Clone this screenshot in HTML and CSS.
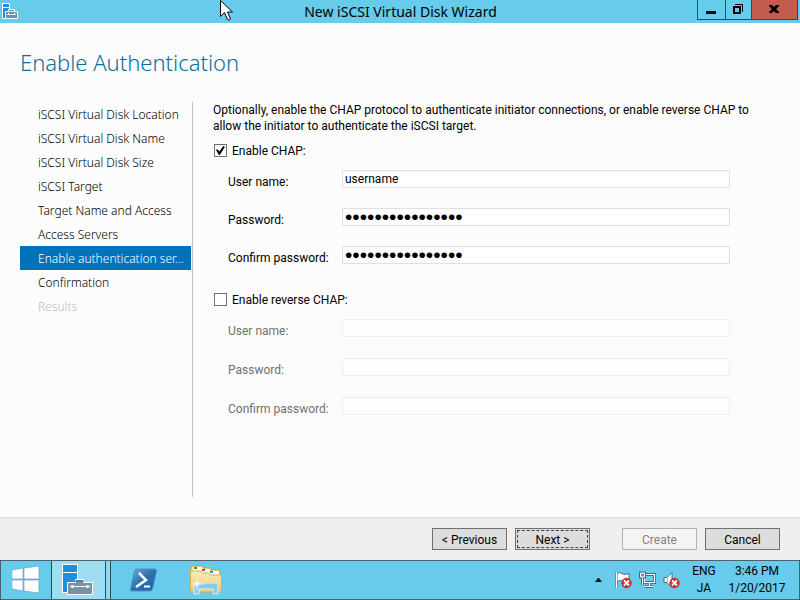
FILE: index.html
```html
<!DOCTYPE html>
<html lang="en">
<head>
<meta charset="utf-8">
<title>New iSCSI Virtual Disk Wizard</title>
<link rel="stylesheet" href="styles.css">
</head>
<body>
<div class="desktop">
  <header class="titlebar">
    <svg class="app-icon" width="18" height="18" viewBox="0 0 18 18" aria-hidden="true">
      <path d="M1.500 1.500h7v15h-7z" fill="#1f8fdc" stroke="#fff"/>
      <path d="M2 5.500h6" stroke="#fff"/>
      <path d="M4.500 9.500h3v-2h6v2h3v7h-12z" fill="#6f8ea8" stroke="#fff"/>
      <path d="M8 9.500h5M6 12.500h9" stroke="#dfeaf2"/>
      <path d="M7.500 11v2M13.500 11v2" stroke="#fff"/>
    </svg>
    <h1 class="window-title">New iSCSI Virtual Disk Wizard</h1>
    <div class="window-buttons">
      <button class="win-btn min" type="button" aria-label="Minimize"><svg width="10" height="11" viewBox="0 0 10 11"><path d="M0 7h10v3H0z"/></svg></button>
      <button class="win-btn max" type="button" aria-label="Restore"><svg width="10" height="10" viewBox="0 0 10 10"><path d="M2 0h8v8H9V1H2zM0 2h8v8H0zM2 4v4h4V4z" fill-rule="evenodd"/></svg></button>
      <button class="win-btn close" type="button" aria-label="Close"><svg width="10" height="8" viewBox="0 0 10 8"><path d="M0 0h3l2 2 2-2h3v1L7 4l3 3v1H7L5 6 3 8H0V7l3-3-3-3z"/></svg></button>
    </div>
  </header>

  <main class="content">
    <h2 class="page-title">Enable Authentication</h2>
    <div class="columns">
      <nav class="steps">
        <a href="#location">iSCSI Virtual Disk Location</a>
        <a href="#name">iSCSI Virtual Disk Name</a>
        <a href="#size">iSCSI Virtual Disk Size</a>
        <a href="#target">iSCSI Target</a>
        <a href="#access">Target Name and Access</a>
        <a href="#servers">Access Servers</a>
        <a class="current" href="#auth" aria-current="step">Enable authentication ser...</a>
        <a href="#confirmation">Confirmation</a>
        <a class="off" aria-disabled="true">Results</a>
      </nav>
      <form class="auth" id="auth">
        <p class="intro">Optionally, enable the CHAP protocol to authenticate initiator connections, or enable reverse CHAP to<br>allow the initiator to authenticate the iSCSI target.</p>
        <label class="toggle"><input type="checkbox" checked> Enable CHAP:</label>
        <div class="fields">
          <label for="user">User name:</label><input id="user" type="text" value="username">
          <label for="pass">Password:</label><input id="pass" type="password" value="aaaaaaaaaaaaaaaa">
          <label for="pass2">Confirm password:</label><input id="pass2" type="password" value="aaaaaaaaaaaaaaaa">
        </div>
        <label class="toggle"><input type="checkbox"> Enable reverse CHAP:</label>
        <div class="fields disabled">
          <label for="ruser">User name:</label><input id="ruser" type="text" disabled>
          <label for="rpass">Password:</label><input id="rpass" type="password" disabled>
          <label for="rpass2">Confirm password:</label><input id="rpass2" type="password" disabled>
        </div>
      </form>
    </div>
  </main>

  <footer class="actions">
    <button class="btn" type="button">&lt; Previous</button>
    <button class="btn focused" type="button">Next &gt;</button>
    <button class="btn create" type="button" disabled>Create</button>
    <button class="btn" type="button">Cancel</button>
  </footer>

  <div class="taskbar">
    <button class="task start" type="button" aria-label="Start">
      <svg width="28" height="28" viewBox="0 0 28 28"><path d="M0 4l11-2v11H0zM12 2l15-2v13H12zM0 14h11v11L0 23zM12 14h15v13l-15-2z" fill="#fff" stroke="#4b9fc0" stroke-width=".6"/></svg>
    </button>
    <button class="task active" type="button" aria-label="Server Manager">
      <svg width="34" height="34" viewBox="0 0 34 34"><path d="M1.500 1.500h15v28h-15z" fill="#1f8fdc" stroke="#fff"/><path d="M2 9.500h14" stroke="#fff"/><path d="M6.500 19.500h8v-3h8v3h9v12h-25z" fill="#7592a8" stroke="#fff"/><path d="M14.500 17h8v2h-8z" fill="#5c7c94"/><path d="M9 23.500h20" stroke="#fff"/><path d="M11.500 22v3M26.500 22v3" stroke="#fff" stroke-width="2"/></svg>
    </button>
    <button class="task shell" type="button" aria-label="PowerShell">
      <svg width="28" height="24" viewBox="0 0 28 24"><defs><linearGradient id="ps" x1="0" y1="0" x2="1" y2="1"><stop offset="0" stop-color="#6daed9"/><stop offset=".5" stop-color="#2b70b0"/><stop offset="1" stop-color="#2263a5"/></linearGradient></defs><path d="M7 1h18q2 0 1.500 2l-4 18q-.5 2-2.500 2H2q-2 0-1.500-2l4-18Q5 1 7 1z" fill="url(#ps)" stroke="#4c91bd"/><path d="M9 5l7 7-10 7" fill="none" stroke="#fff" stroke-width="2.500"/><path d="M14 18.500h6" stroke="#fff" stroke-width="2"/></svg>
    </button>
    <button class="task files" type="button" aria-label="File Explorer">
      <svg width="34" height="30" viewBox="0 0 34 30"><defs><linearGradient id="fo" x1="0" y1="0" x2="0" y2="1"><stop offset="0" stop-color="#fbeeb5"/><stop offset="1" stop-color="#e9c871"/></linearGradient></defs><path d="M2 26V3q0-2 2-2h9q1 0 1 2h7q1 0 1 2h7q2 0 2 2v19z" fill="#f3dd95" stroke="#c9a653"/><path d="M4 2h9v4H4zM13 4h8v4h-8zM21 6h9v4h-9z" fill="#fff"/><path d="M5 2h3v2H5z" fill="#21a536"/><path d="M13 4h3v2h-3z" fill="#d93c27"/><path d="M21 6h3v2h-3z" fill="#2c8ed6"/><path d="M1.500 7q0-1 1-1h9l2 2h6l2 2h11v16q0 1-1 1h-29q-1 0-1-1z" fill="url(#fo)" stroke="#d3ae58"/><path d="M5 29v-8q0-3 3-3h18q3 0 3 3v8h-5v-5H10v5z" fill="#8bcae7" stroke="#d6f1fb"/><path d="M8 13v12M2 19h12" stroke="#fff" stroke-width=".8"/><path d="M5 16l6 6M11 16l-6 6" stroke="#fff" stroke-width=".5"/><circle cx="8" cy="19" r="1.800" fill="#fff"/></svg>
    </button>
    <div class="tray">
      <svg class="caret" width="7" height="4" viewBox="0 0 7 4"><path d="M3 0h1l3 4H0z" fill="#111"/></svg>
      <svg width="17" height="18" viewBox="0 0 17 18"><path d="M1.500 1v16" stroke="#476b7b" stroke-width="2"/><path d="M2 2.500q3-2 5 0t7 0v8q-4 2-6 0t-6 0z" fill="#fff" stroke="#476b7b"/><path d="M1.500 1v16" stroke="#fff"/><circle cx="11.500" cy="12" r="4.800" fill="#d92c25" stroke="#a92320" stroke-width=".6"/><path d="M9 9.500l5 5M14 9.500l-5 5" stroke="#fff" stroke-width="1.800"/></svg>
      <svg width="17" height="18" viewBox="0 0 17 18"><path d="M6 3.500h9.500v8H5.500M10.500 12v3M6 15.500h8" fill="none" stroke="#476b7b" stroke-width="3"/><path d="M6 3.500h9.500v8H5.500V7M10.500 12v3M6 15.500h8" fill="none" stroke="#fff" stroke-width="1.200"/><path d="M1.500 2h4v4h-4zM3.500 7v7" fill="#6797aa" stroke="#476b7b" stroke-width="3"/><path d="M1.500 2h4v4h-4zM3.500 7v7" fill="#6797aa" stroke="#fff"/></svg>
      <svg width="17" height="18" viewBox="0 0 17 18"><path d="M1 6.500h3l5-5v15l-5-5H1z" fill="#fff" stroke="#476b7b"/><path d="M4.500 7v4" stroke="#8bb0be"/><circle cx="11.500" cy="12" r="4.800" fill="#d92c25" stroke="#a92320" stroke-width=".6"/><path d="M9 9.500l5 5M14 9.500l-5 5" stroke="#fff" stroke-width="1.800"/></svg>
      <div class="lang">ENG<br>JA</div>
      <div class="clock">3:46 PM<br>1/20/2017</div>
    </div>
  </div>
  <svg class="cursor" width="13" height="21" viewBox="0 0 13 21" aria-hidden="true"><path d="M.5.500v16l4-4 3 7q1.500 1.500 3-.5l-3-7h5z" fill="#fff" stroke="#000"/></svg>
</div>
</body>
</html>
```
FILE: styles.css
```css
* { box-sizing: border-box; }

body {
  margin: 0;
  font: 12px/16px Roboto, "Open Sans", sans-serif;
  color: #000;
  background: #fcfcfc;
}

button, input { font: inherit; color: inherit; }
h1, h2, p { margin: 0; }

.desktop {
  position: relative;
  display: flex;
  flex-direction: column;
  min-height: 100vh;
}

.titlebar {
  display: grid;
  grid-template-columns: 1fr auto 1fr;
  align-items: start;
  height: 23px;
  padding-left: 1px;
  background: #67cbeb;
}

.app-icon { margin-top: 2px; }

.window-title {
  font-family: "Noto Sans", sans-serif;
  font-size: 14px;
  font-weight: 400;
  line-height: 23px;
}

.window-buttons {
  display: flex;
  justify-content: flex-end;
  padding-right: 2px;
}

.win-btn {
  display: grid;
  place-items: center;
  width: 28px;
  height: 20px;
  padding: 0 2px 1px 0;
  border: 1px solid #2a4f5c;
  border-top: 0;
  border-right: 0;
  background: transparent;
}

.win-btn.max { width: 26px; }
.win-btn.close { width: 47px; border-right: 1px solid #5a2f2c; background: #c45b50; }

.content {
  flex: 1;
  display: flex;
  flex-direction: column;
  padding: 23px 20px 20px;
}

.page-title {
  font-family: "Noto Sans", sans-serif;
  font-size: 22px;
  font-weight: 300;
  line-height: 32px;
  color: #0a6f9c;
}

.columns {
  flex: 1;
  display: flex;
  margin-top: 24px;
}

.steps {
  flex: none;
  width: 173px;
  padding-right: 1px;
  border-right: 1px solid #c3c3c3;
}

.steps a {
  display: block;
  padding: 2px 0 0 18px;
  font-family: "Noto Sans", sans-serif;
  font-size: 12px;
  font-weight: 300;
  line-height: 22px;
  color: #000;
  text-decoration: none;
  white-space: nowrap;
}

.steps .current { background: #0072bc; color: #fff; }
.steps .off { color: #bbb; }

.auth { flex: 1; min-width: 0; padding: 0 50px 0 20px; }
.intro { white-space: nowrap; }

.toggle {
  display: flex;
  align-items: center;
  gap: 5px;
  margin: 9px 0 11px 1px;
}

.toggle input {
  appearance: none;
  display: grid;
  place-items: center;
  width: 13px;
  height: 13px;
  margin: 0 0 1px;
  border: 1px solid #707070;
  background: #fff;
}

.toggle input:checked::before {
  content: "";
  width: 9px;
  height: 9px;
  background: #000;
  clip-path: polygon(0 45%, 18% 35%, 38% 62%, 80% 0, 100% 8%, 42% 100%, 32% 100%);
}

.fields {
  display: grid;
  grid-template-columns: 114px 1fr;
  row-gap: 18px;
  padding-left: 15px;
  margin-bottom: 26px;
}

.fields label { padding-top: 4px; }

.fields input {
  width: 100%;
  height: 18px;
  margin-bottom: 2px;
  padding: 0 2px;
  border: 1px solid #dfdfe8;
  border-radius: 0;
  background: #fff;
  outline: 0;
}

.fields input[type="password"] {
  font-family: "Liberation Sans", sans-serif;
  font-size: 21px;
}

.fields.disabled { row-gap: 19px; margin-bottom: 0; color: #707070; }
.fields.disabled input { border-color: #ededed; background: #fdfdfd; }

.actions {
  display: flex;
  justify-content: flex-end;
  gap: 8px;
  padding: 10px 20px;
  border-top: 1px solid #dcdcdc;
  background: #efefef;
}

.btn {
  width: 75px;
  height: 22px;
  padding: 2px 0 0;
  border: 1px solid #707070;
  border-radius: 0;
  background: #ddd;
}

.btn.focused { outline: 1px dashed #444; outline-offset: -3px; }
.btn.create { margin-left: 24px; border-color: #adb2b5; background: #f4f4f4; color: #838383; }

.taskbar {
  display: flex;
  height: 40px;
  border: 1px solid #4a626c;
  background: #67cbeb;
}

.task {
  display: grid;
  place-items: center;
  padding: 0;
  border: 0;
  background: transparent;
}

.start { width: 50px; }
.active {
  width: 60px;
  padding-right: 6px;
  border: solid #2a4f5c;
  border-width: 0 1px;
  background: linear-gradient(90deg, #a0ddf2 53px, #2a4f5c 53px, #2a4f5c 54px, #8ed7ef 54px);
}
.shell { width: 66px; }
.files { width: 58px; }

.tray {
  flex: 1;
  display: flex;
  align-items: center;
  justify-content: flex-end;
  gap: 7px;
  padding-right: 13px;
  text-align: center;
}

.caret { margin-right: 6px; }
.lang { width: 34px; line-height: 17px; }
.clock { width: 58px; line-height: 17px; }

.cursor { position: absolute; left: 220px; top: 0; }
```
